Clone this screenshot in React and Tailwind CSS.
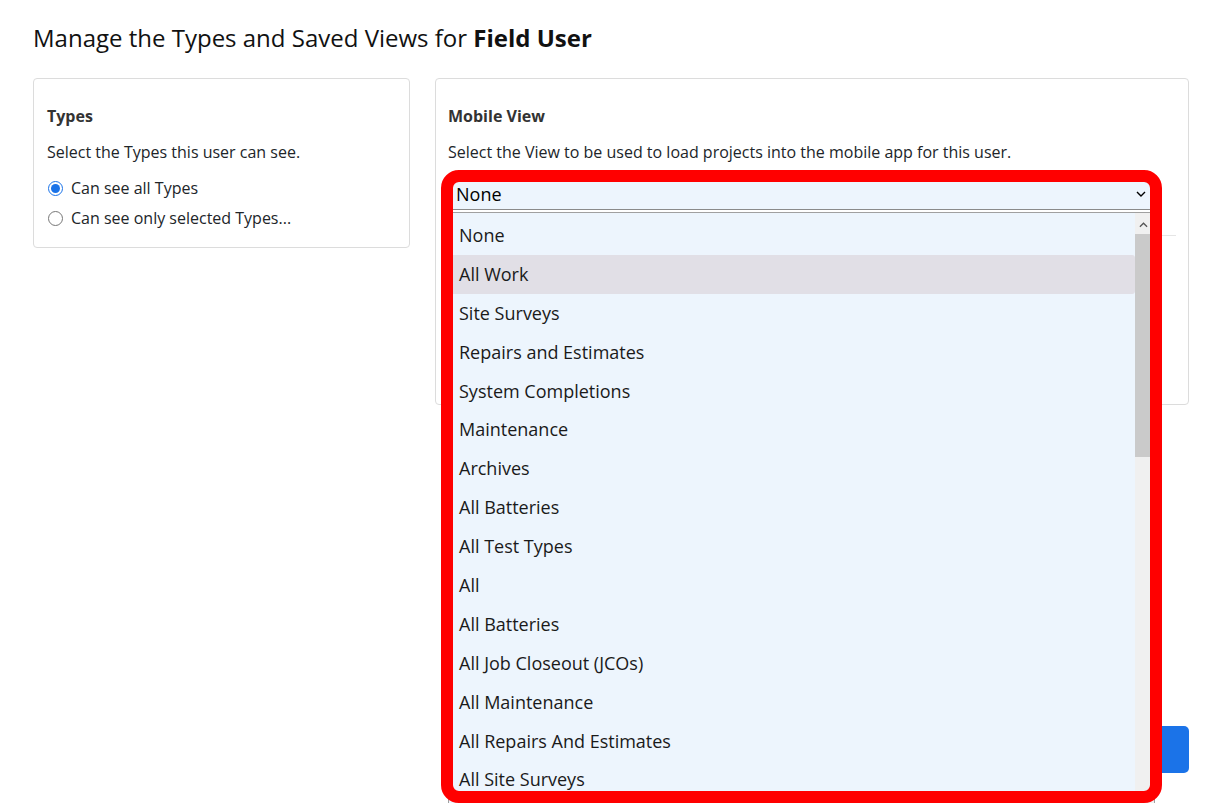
import React, { useState } from "react";

const views = [
  "None",
  "All Work",
  "Site Surveys",
  "Repairs and Estimates",
  "System Completions",
  "Maintenance",
  "Archives",
  "All Batteries",
  "All Test Types",
  "All",
  "All Batteries",
  "All Job Closeout (JCOs)",
  "All Maintenance",
  "All Repairs And Estimates",
  "All Site Surveys",
];

const ChevronDown = ({ className }) => (
  <svg viewBox="0 0 10 6" className={className} fill="none" stroke="currentColor" strokeWidth="1.4">
    <path d="M1 1l4 4 4-4" />
  </svg>
);

const ChevronUp = ({ className }) => (
  <svg viewBox="0 0 10 6" className={className} fill="none" stroke="currentColor" strokeWidth="1.4">
    <path d="M1 5l4-4 4 4" />
  </svg>
);

const App = () => {
  const [typeMode, setTypeMode] = useState("all");
  const [hovered] = useState(1);

  return (
    <div className="h-screen overflow-hidden bg-white font-['Open_Sans',sans-serif] text-[#212529]">
      <div className="pl-[33px] pr-[26px] pt-[22px]">
        {/* Page title */}
        <h1 className="text-[24px] leading-[32px] text-[#111]">
          Manage the Types and Saved Views for <span className="font-bold">Field User</span>
        </h1>

        <div className="mt-[24px] flex items-start gap-[25px]">
          {/* Types card */}
          <div className="w-[377px] rounded-[4px] border border-[#dcdcdc] px-[13px] pt-[25px] pb-[14px]">
            <h2 className="text-[16px] font-bold leading-[24px] text-[#333]">Types</h2>
            <p className="mt-[12px] text-[16px] leading-[24px]">Select the Types this user can see.</p>
            <label className="mt-[9px] flex items-center gap-[8px] text-[16px] leading-[30px]">
              <input
                type="radio"
                name="types"
                checked={typeMode === "all"}
                onChange={() => setTypeMode("all")}
                className="m-0 ml-[1px] h-[15px] w-[15px] accent-[#1a73e8]"
              />
              Can see all Types
            </label>
            <label className="flex items-center gap-[8px] text-[16px] leading-[30px]">
              <input
                type="radio"
                name="types"
                checked={typeMode === "selected"}
                onChange={() => setTypeMode("selected")}
                className="m-0 ml-[1px] h-[15px] w-[15px] accent-[#1a73e8]"
              />
              Can see only selected Types...
            </label>
          </div>

          {/* Mobile view column */}
          <div className="flex flex-1 flex-col">
            <div className="relative h-[327px] rounded-[4px] border border-[#dcdcdc] px-[12px] pt-[25px]">
              <h2 className="text-[16px] font-bold leading-[24px] text-[#333]">Mobile View</h2>
              <p className="mt-[12px] text-[16px] leading-[24px]">
                Select the View to be used to load projects into the mobile app for this user.
              </p>
              <div className="mt-[17px] flex h-[29px] w-[707px] items-center justify-between border-b border-[#8a8a8a] bg-[#edf5fd] pb-[2px] pl-[8px] pr-[9px] text-[18px] text-black">
                <span>None</span>
                <ChevronDown className="h-[6px] w-[10px]" />
              </div>
              <div className="mt-[25px] border-t border-[#e5e5e5]" />

              {/* Open dropdown list */}
              <div className="absolute left-[12px] top-[133px] z-10 flex h-[620px] w-[707px] border border-[#a0a0a0] bg-[#edf5fd]">
                <ul className="flex-1 pt-[3px]">
                  {views.map((v, i) => (
                    <li
                      key={i}
                      className={`flex h-[38.9px] items-center rounded-[3px] pl-[10px] text-[18px] text-[#1a1a1a] ${
                        i === hovered ? "bg-[#e1dfe6]" : ""
                      }`}
                    >
                      {v}
                    </li>
                  ))}
                </ul>
                <div className="flex w-[19px] flex-col bg-[#f0f0f0]">
                  <div className="flex h-[21px] items-center justify-center pr-[2px] pt-[2px] text-[#555]">
                    <ChevronUp className="h-[6px] w-[9px]" />
                  </div>
                  <div className="h-[223px] bg-[#cacaca]" />
                </div>
              </div>

              {/* Annotation frame */}
              <div className="pointer-events-none absolute left-[5px] top-[91px] z-20 h-[633px] w-[721px] rounded-[18px] border-[12px] border-[#ff0000]" />
            </div>

            <div className="mt-[321px] flex justify-end">
              <button className="h-[47px] w-[120px] rounded-[5px] bg-[#1b73e8] text-[16px] text-white">
                Save
              </button>
            </div>
          </div>
        </div>
      </div>
    </div>
  );
};

export default App;
